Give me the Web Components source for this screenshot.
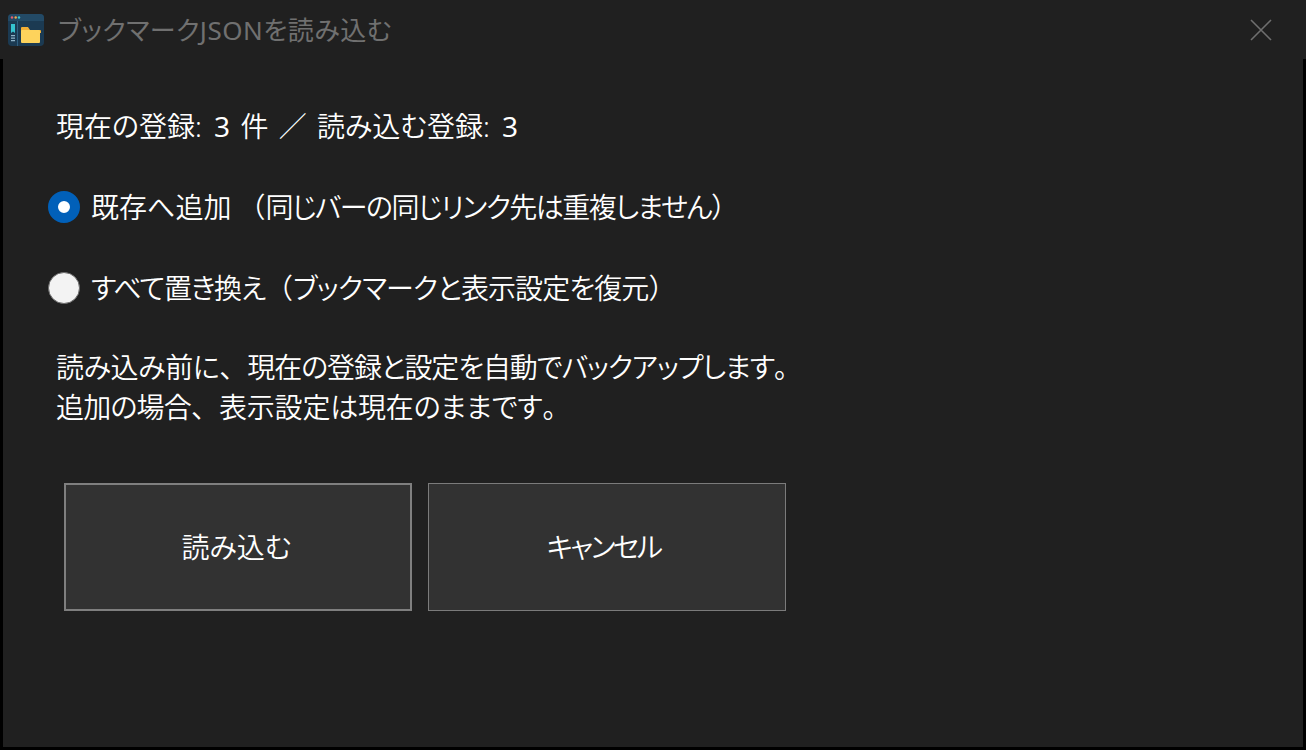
<!DOCTYPE html>
<html lang="ja">
<head>
<meta charset="utf-8">
<title>ブックマークJSONを読み込む</title>
<style>
    html, body { margin: 0; height: 100%; background: #000; overflow: hidden; }
    body {
        font-family: "Noto Sans", "Noto Sans CJK JP", "Liberation Sans", sans-serif;
        font-weight: 350;
        font-feature-settings: "palt";
        color: #fff;
    }
    /* full width brackets and commas, like the original font */
    .fw { font-feature-settings: normal; letter-spacing: 0; }
    .open { margin-left: 6px; }
    .num { font-weight: 400; margin-left: 2px; }
</style>
</head>
<body>
<import-dialog heading="ブックマークJSONを読み込む">
    <info-line>現在の登録: <span class="num">3</span> 件 ／ 読み込む登録: <span class="num">3</span></info-line>
    <radio-option checked>既存へ追加<span class="fw open">（</span><span style="letter-spacing: -1.5px">同じバーの同じリンク先は重複しません</span><span class="fw">）</span></radio-option>
    <radio-option><span style="letter-spacing: -1.2px">すべて置き換え</span><span class="fw">（</span><span style="letter-spacing: -0.9px">ブックマークと表示設定を復元</span><span class="fw">）</span></radio-option>
    <info-line class="note"><span style="letter-spacing: -0.4px">読み込み前に</span><span class="fw">、</span><span style="letter-spacing: -1.1px">現在の登録と設定を自動でバックアップします</span><span class="fw">。</span><br><span style="letter-spacing: -0.8px">追加の場合</span><span class="fw">、</span><span style="letter-spacing: -0.2px">表示設定は現在のままです</span><span class="fw">。</span></info-line>
    <button-row>
        <action-button primary width="348">読み込む</action-button>
        <action-button width="358" spacing="-2.6px">キャンセル</action-button>
    </button-row>
</import-dialog>

<script>
class ImportDialog extends HTMLElement {
    constructor() {
        super();
        this.attachShadow({mode: "open"});
    }

    connectedCallback() {
        this.shadowRoot.innerHTML = `
            <style>
                :host {
                    display: flex;
                    flex-direction: column;
                    width: 1306px;
                    height: 750px;
                    box-sizing: border-box;
                    padding-bottom: 3px;
                }
                .title {
                    flex: none;
                    height: 59px;
                    background: #202020;
                    display: flex;
                    align-items: center;
                    padding-left: 8px;
                    color: #707070;
                    font-size: 26px;
                    font-weight: 400;
                    letter-spacing: 0.5px;
                }
                .title svg { flex: none; margin-right: 14px; }
                .title span { flex: 1; margin-top: -2px; }
                .title .close { flex: none; margin: 0 34px 0 0; }
                .body {
                    flex: 1;
                    margin: 0 3px;
                    background: #202020;
                    padding: 47px 0 0 45px;
                }
            </style>
            <div class="title">
                <svg width="36" height="32" viewBox="0 0 36 32">
                    <rect width="36" height="32" rx="4" fill="#1b3a52"/>
                    <path d="M0 7V4a4 4 0 0 1 4-4h28a4 4 0 0 1 4 4v3z" fill="#234a66"/>
                    <rect x="9" y="7" width="1" height="25" fill="#2f5f80"/>
                    <circle cx="4" cy="3.5" r="1.2" fill="#e8626a"/>
                    <circle cx="7.7" cy="3.5" r="1.2" fill="#f0a94b"/>
                    <circle cx="11" cy="3.5" r="1.2" fill="#3cc6d0"/>
                    <path d="M3 10h4v9l-2-1.5L3 19z" fill="#35c3cf"/>
                    <path d="M3 21h4v1.3H3zM3 23.5h4v1.3H3zM3 26h4v1.3H3z" fill="#8fb3c8"/>
                    <path d="M13 14a1 1 0 0 1 1-1h6l2 3h10a1 1 0 0 1 1 1v2H13z" fill="#f0ae35"/>
                    <rect x="13" y="16" width="19" height="13" rx="1" fill="#fdd35c"/>
                </svg>
                <span>${this.getAttribute("heading")}</span>
                <svg class="close" width="22" height="22" viewBox="0 0 22 22">
                    <path d="M1 1l20 20M21 1L1 21" stroke="#6f6f6f" stroke-width="1.6" fill="none"/>
                </svg>
            </div>
            <div class="body"><slot></slot></div>`;
    }
}

class InfoLine extends HTMLElement {
    constructor() {
        super();
        this.attachShadow({mode: "open"});
    }

    connectedCallback() {
        this.shadowRoot.innerHTML = `
            <style>
                :host {
                    display: block;
                    margin-left: 8px;
                    font-size: 28px;
                    line-height: 40px;
                    white-space: nowrap;
                    word-spacing: 3px;
                }
                :host(.note) { margin-top: 39px; }
            </style>
            <slot></slot>`;
    }
}

class RadioOption extends HTMLElement {
    constructor() {
        super();
        this.attachShadow({mode: "open"});
    }

    connectedCallback() {
        this.shadowRoot.innerHTML = `
            <style>
                :host {
                    display: flex;
                    align-items: center;
                    gap: 11px;
                    height: 40px;
                    margin-top: 41px;
                    font-size: 28px;
                    white-space: nowrap;
                }
                .dot {
                    flex: none;
                    width: 32px;
                    height: 32px;
                    box-sizing: border-box;
                    border-radius: 50%;
                    background: #f3f3f3;
                    border: 1.5px solid #6a6a6a;
                }
                :host([checked]) .dot {
                    background: #fff;
                    border: 10px solid #0160b9;
                }
                span { margin-top: -2px; }
            </style>
            <div class="dot"></div>
            <span><slot></slot></span>`;
    }
}

class ButtonRow extends HTMLElement {
    constructor() {
        super();
        this.attachShadow({mode: "open"});
    }

    connectedCallback() {
        this.shadowRoot.innerHTML = `
            <style>
                :host {
                    display: flex;
                    gap: 16px;
                    margin: 56px 0 0 16px;
                }
            </style>
            <slot></slot>`;
    }
}

class ActionButton extends HTMLElement {
    constructor() {
        super();
        this.attachShadow({mode: "open"});
    }

    connectedCallback() {
        this.shadowRoot.innerHTML = `
            <style>
                :host {
                    display: flex;
                    align-items: center;
                    justify-content: center;
                    box-sizing: border-box;
                    width: ${this.getAttribute("width")}px;
                    height: 128px;
                    padding: 0 7px 2px 0;
                    background: #323232;
                    border: 1px solid #7b7b7b;
                    font-size: 28px;
                    letter-spacing: ${this.getAttribute("spacing") || 0};
                }
                :host([primary]) { border: 2px solid #7f7f7f; padding-right: 3px; }
            </style>
            <slot></slot>`;
    }
}

customElements.define("import-dialog", ImportDialog);
customElements.define("info-line", InfoLine);
customElements.define("radio-option", RadioOption);
customElements.define("button-row", ButtonRow);
customElements.define("action-button", ActionButton);
</script>
</body>
</html>
